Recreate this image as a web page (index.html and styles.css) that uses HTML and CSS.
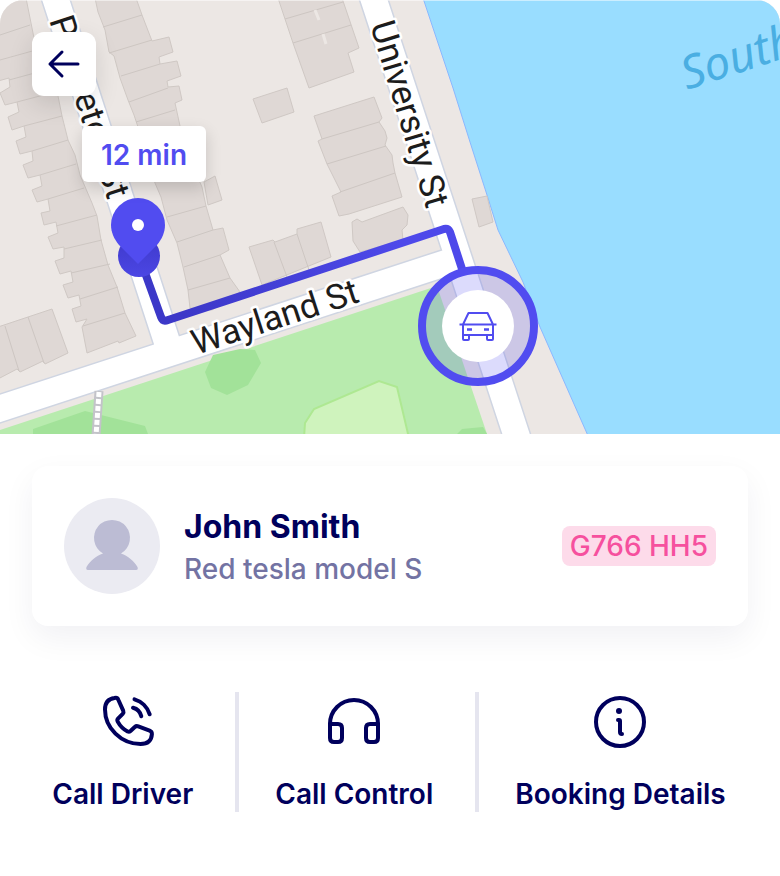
FILE: index.html
```html
<!DOCTYPE html>
<html lang="en">
<head>
  <meta charset="UTF-8" />
  <meta name="viewport" content="width=device-width, initial-scale=1" />
  <title>Your Ride</title>
  <link rel="stylesheet" href="styles.css">
</head>
<body>
  <main class="ride">
    <section class="map" aria-label="Route map">
      <svg class="map-canvas" viewBox="0 0 780 434" preserveAspectRatio="xMinYMin slice">
        <defs>
          <linearGradient id="routeFill" gradientUnits="userSpaceOnUse" x1="190" y1="330" x2="400" y2="240">
            <stop offset="0" stop-color="#3c38c8" />
            <stop offset="1" stop-color="#4e49ea" />
          </linearGradient>
          <linearGradient id="stopFill" x1="0" y1="0" x2="0" y2="1">
            <stop offset="0" stop-color="#3e39c9" />
            <stop offset="1" stop-color="#4b46e4" />
          </linearGradient>
        </defs>

        <rect width="780" height="434" fill="#ece7e4" />

        <!-- water -->
        <path class="water" d="M423 -2L453 88L470 142L487 195L498 230L523 282L540 327L589 438H790V-2Z" />

        <!-- park -->
        <path fill="#b8ebae" d="M0 430L437 286L487 434H0Z" />
        <path fill="#a2e299" d="M205 372L213 355L240 349L255 350L261 363L248 385L227 395L211 388ZM33 434V429L85 411L145 426L148 434ZM457 434L462 429L483 427L487 434Z" />
        <path fill="#cff3bd" stroke="#aee892" stroke-width="2" d="M304 438L305 423L314 409L379 381L397 387L409 438" />

        <!-- buildings -->
        <g class="building">
          <path d="M-2 -2H26L34 38L40 71L58 96L62 116L68 140L75 155L80 175L92 203L97 216L101 240L108 265L117 287L125 313L136 336L119 343L118 341L87 353L82 327L87 319L76 322L72 309L81 306L79 295L68 298L63 285L73 282L71 271L60 274L55 261L64 258V247L53 249L48 237L58 233L56 222L44 225L41 213L50 211L48 199L37 202L32 190L42 186L40 175L28 178L23 165L33 161L32 151L20 154L16 141L26 137L24 126L12 130L8 117L19 112L17 102L5 105L0 93L10 87L9 78L-2 81Z" />
          <path d="M95 -2H136L142 15L152 41L169 37L173 52L159 57L160 64L177 61L181 76L167 81L168 87L179 86L182 100L175 103L180 126L190 160L202 187L206 206L213 230L223 228L229 250L220 255L230 278L240 292L212 310L190 308L188 290L183 267L177 243L167 220L161 197L155 183L138 127L134 115L128 100L120 78L114 56L109 52L105 30L98 12Z" />
          <path d="M204 182L215 176L222 200L208 205Z" />
          <path d="M-2 327L52 309L68 353L45 364L43 361L20 372L17 369L-2 379Z" />
          <path d="M278 -2H342L359 48L348 53L354 72L309 88L293 43Z" />
          <path d="M253 99L287 88L294 112L262 123Z" />
          <path d="M314 116L374 97L382 118L379 122L385 131L387 138L385 145L392 155L393 163L395 173L402 197L349 214L339 216L332 196L341 192L327 164L318 141L322 139Z" />
          <path d="M352 222L357 219L362 222L403 207L408 215L407 225L402 230L403 240L360 252L353 241Z" />
          <path d="M249 247L273 240L275 242L297 234V229L321 222L331 257L262 285Z" />
          <path d="M472 199L487 196L493 222L479 227Z" />
        </g>
        <path class="party-wall" d="M0 35L30 25M0 60L36 50M9 80L42 71M17 102L55 92M24 126L62 116M32 151L68 140M40 175L76 164M48 199L84 188M56 226L97 215M64 249L102 240M71 273L110 264M80 299L118 287M83 326L125 313M103 27L142 15M109 53L152 40M121 76L160 64M129 102L168 88M136 122L175 110M167 217L206 206M177 242L213 230M184 267L220 255M188 290L230 278M5 326L19 371M28 317L44 363M285 19L343 2M293 43L351 25M322 139L379 122M327 164L386 146M340 192L395 173M274 242L287 277M297 234L309 270" />
        <path stroke="#ece7e4" stroke-width="3" d="M315 10L319 20M323 34L326 44" />

        <!-- roads -->
        <path class="road-edge" d="M51 -15L167 342M-20 415L455 260M369 -15L520 446" />
        <path class="road" d="M51 -15L167 342M-20 415L455 260M369 -15L520 446" />
        <path stroke="#c3c3c9" stroke-width="9" d="M99 391L96 436" />
        <path stroke="#fff" stroke-width="5" stroke-dasharray="5 2" d="M99 392L96 436" />

        <g class="street-name">
          <text transform="translate(49 20) rotate(72)">Princeton St</text>
          <text transform="translate(370 25) rotate(73)">University St</text>
          <text transform="translate(196 355) rotate(-18)">Wayland St</text>
        </g>
        <text class="water-name" transform="translate(687 90) rotate(-18)">South</text>

        <!-- route -->
        <path class="route" d="M139 256L161 317Q163 322 168 320L444 229Q448 228 450 232L463 272" />
        <circle cx="139" cy="256" r="21" fill="url(#stopFill)" />
        <path fill="#514cf0" d="M138 264L119 245C114 239 111 232 111 225A27 27 0 0 1 165 225C165 232 162 239 157 245Z" />
        <circle cx="138" cy="225" r="6" fill="#fff" />

        <!-- car -->
        <circle cx="478" cy="326" r="56" fill="#514cf0" fill-opacity="0.2" stroke="#514cf0" stroke-width="8" />
        <circle cx="478" cy="326" r="36" fill="#fff" />
        <g fill="none" stroke="#514cf0" stroke-width="2">
          <path stroke-linejoin="round" d="M463 324.500L468.500 313H487.500L493 324.500M459.500 324.500H496.500M463 324.500V339Q463 340 464 340H468Q469 340 469 339V335M493 324.500V339Q493 340 492 340H488Q487 340 487 339V335M463 335H493" />
          <path stroke-width="2.500" d="M467 329.500H472M484 329.500H489" />
        </g>
        <rect width="780" height="1" fill="#fff" fill-opacity="0.5" />
      </svg>

      <button class="back" aria-label="Back">
        <svg viewBox="0 0 64 64" width="64" height="64"><path d="M46 32H18M30 20L18 32L30 44" /></svg>
      </button>
      <div class="eta">12 min</div>
    </section>

    <section class="driver">
      <svg class="avatar" viewBox="0 0 96 96" aria-hidden="true">
        <circle cx="48" cy="48" r="48" fill="#ebebf2" />
        <path fill="#bcbcd4" d="M39 55.500A18 18 0 1 1 57 55.500C64 58 70 63 73.500 69Q74.500 72 72 72H24Q21.500 72 22.500 69C26 63 32 58 39 55.500Z" />
      </svg>
      <div class="driver-info">
        <h1>John Smith</h1>
        <p>Red tesla model S</p>
      </div>
      <span class="plate">G766 HH5</span>
    </section>

    <nav class="actions">
      <button class="action">
        <svg viewBox="0 0 64 64" aria-hidden="true">
          <path d="M23.500 8C25.300 7.500 26.700 8.200 27.300 9.700L32.200 20.600C32.700 21.800 32.500 22.900 31.700 23.800L27 28.700C26.200 29.600 26.100 30.500 26.700 31.600C29 35.800 32.200 39.200 36.600 41.500C37.700 42 38.600 41.800 39.500 41L43.800 37C44.900 36 46 35.900 47.300 36.400L58.600 40.600C60.400 41.300 61 42.300 60.900 44.100C60.500 50.800 56.300 54 49.500 54C30 54 14 38 14 19.500C14 12.600 17.500 8.800 23.500 8Z" />
          <path d="M42 17.700C46 18.700 49.300 22 50.300 26.300M43.500 9.300C50.500 11.300 56.500 17 58.700 24.300" />
        </svg>
        <span>Call Driver</span>
      </button>
      <button class="action">
        <svg viewBox="0 0 64 64" aria-hidden="true">
          <path d="M8 36V34A24 24 0 0 1 56 34V36" />
          <path d="M8 34H16Q20 34 20 38V48Q20 52 16 52H12Q8 52 8 48ZM56 34H48Q44 34 44 38V48Q44 52 48 52H52Q56 52 56 48Z" />
        </svg>
        <span>Call Control</span>
      </button>
      <button class="action">
        <svg viewBox="0 0 64 64" aria-hidden="true">
          <circle cx="32" cy="32" r="24" />
          <path d="M30 30H31Q32 30 32 31V42Q32 44 34 44" />
          <circle class="dot" cx="31" cy="21" r="3" />
        </svg>
        <span>Booking Details</span>
      </button>
    </nav>
  </main>
</body>
</html>
```
FILE: styles.css
```css
* {
  box-sizing: border-box;
}
body {
  margin: 0;
  background: #fff;
  color: #00005c;
  font-family: Inter, "Liberation Sans", sans-serif;
}
button {
  border: none;
  background: none;
  color: inherit;
  font: inherit;
  cursor: pointer;
}
.map {
  position: relative;
  height: 434px;
  border-radius: 24px 24px 0 0;
  overflow: hidden;
}
.map-canvas {
  display: block;
  width: 100%;
  height: 100%;
}
.water {
  fill: #99ddff;
  stroke: #8ab8ff;
  stroke-width: 1;
}
.building {
  fill: #dfd8d5;
  stroke: #cfc8c4;
  stroke-width: 1;
}
.party-wall {
  stroke: #cdc6c2;
  stroke-width: 1;
}
.road-edge,
.road {
  fill: none;
  stroke: #cfd5e2;
  stroke-width: 29px;
}
.road {
  stroke: #fff;
  stroke-width: 26px;
}
.street-name {
  font-family: Roboto, sans-serif;
  font-size: 35px;
  fill: #1c1c1c;
  stroke: #fff;
  stroke-width: 5px;
  stroke-linejoin: round;
  paint-order: stroke;
}
.water-name {
  font-family: "Noto Sans", sans-serif;
  font-size: 46px;
  font-style: italic;
  fill: #4aaee2;
}
.route {
  fill: none;
  stroke: url(#routeFill);
  stroke-width: 8px;
  stroke-linejoin: round;
}
.back {
  position: absolute;
  top: 32px;
  left: 32px;
  width: 64px;
  height: 64px;
  padding: 0;
  border-radius: 12px;
  background: #fff;
  box-shadow: 0 8px 24px rgba(0, 0, 0, 0.12);
}
.back svg {
  display: block;
  fill: none;
  stroke: #00005c;
  stroke-width: 3;
  stroke-linecap: round;
  stroke-linejoin: round;
}
.eta {
  position: absolute;
  top: 126px;
  left: 82px;
  padding: 9px 19px 7px;
  border-radius: 6px;
  background: #fff;
  box-shadow: 0 6px 16px rgba(0, 0, 0, 0.16);
  color: #514cf0;
  font-size: 28px;
  font-weight: 600;
  line-height: 40px;
}
.driver {
  display: flex;
  align-items: center;
  gap: 24px;
  margin: 32px;
  padding: 32px;
  border-radius: 16px;
  background: #fff;
  box-shadow: 0 12px 32px rgba(0, 0, 60, 0.06);
}
.avatar {
  width: 96px;
  height: 96px;
  flex: none;
}
.driver-info {
  flex: 1;
  padding-top: 2px;
}
.driver-info h1 {
  margin: 0;
  font-size: 32px;
  font-weight: 700;
  line-height: 44px;
}
.driver-info p {
  margin: 0;
  color: #7373a3;
  font-size: 28px;
  font-weight: 500;
  line-height: 40px;
}
.plate {
  padding: 0 8px;
  border-radius: 8px;
  background: #fddbea;
  color: #f6509e;
  font-size: 28px;
  font-weight: 500;
  line-height: 40px;
}
.actions {
  display: flex;
  justify-content: center;
  margin: 66px 0 64px;
  padding-right: 2px;
}
.action {
  display: flex;
  flex-direction: column;
  align-items: center;
  justify-content: center;
  gap: 20px;
  height: 120px;
  padding: 0 42px 0 0;
  font-size: 28px;
  font-weight: 600;
  line-height: 40px;
}
.action + .action {
  padding-left: 36px;
  border-left: 4px solid #e5e5ef;
}
.action:last-child {
  padding-right: 0;
}
.action svg {
  width: 64px;
  height: 64px;
  flex: none;
  fill: none;
  stroke: #00005c;
  stroke-width: 4;
  stroke-linecap: round;
  stroke-linejoin: round;
}
.action .dot {
  fill: #00005c;
  stroke: none;
}
```
